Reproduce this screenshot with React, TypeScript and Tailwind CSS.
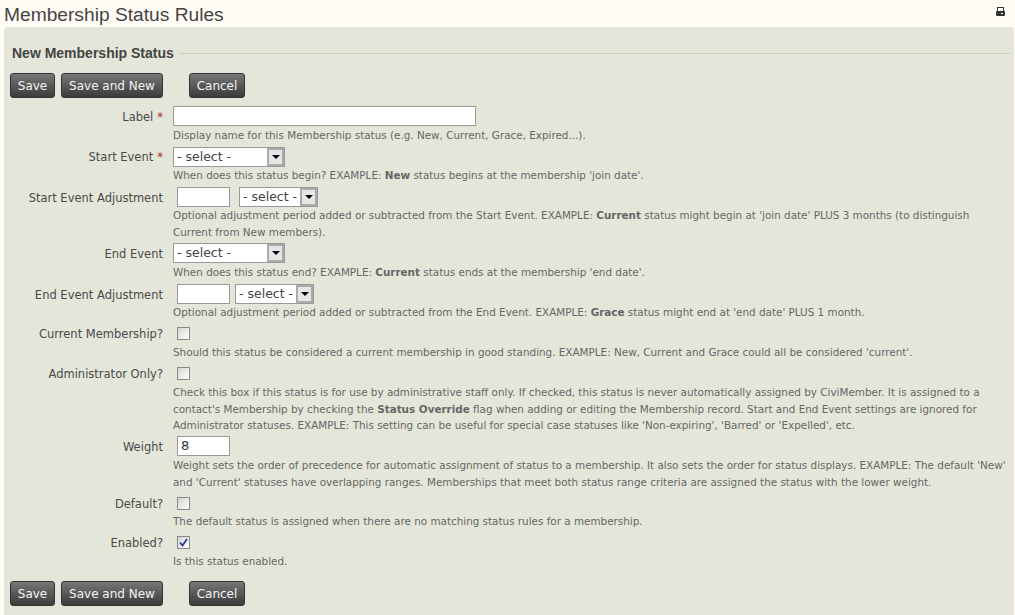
import React from "react";

const verdana = "font-['DejaVu_Sans',Verdana,sans-serif]";

const Buttons = ({ className = "" }: { className?: string }) => {
  const btn =
    "h-[25px] rounded-[3px] border border-[#333] bg-gradient-to-b from-[#777] to-[#3c3c3c] text-[12px] leading-none text-[#f4f4f4] " +
    verdana;
  return (
    <div className={"flex h-[25px] items-center " + className}>
      <button className={btn + " w-[45px]"}>Save</button>
      <button className={btn + " ml-[6px] w-[102px]"}>Save and New</button>
      <button className={btn + " ml-[26px] w-[56px]"}>Cancel</button>
    </div>
  );
};

const Select = ({ wide }: { wide?: boolean }) => (
  <div
    className={
      "flex h-[20px] items-center border border-[#999] bg-white pl-[3px] text-[12.5px] text-[#444] " +
      (wide ? "w-[112px]" : "w-auto")
    }
  >
    <span className="grow whitespace-nowrap pr-[3px]">- select -</span>
    <span className="flex h-[18px] w-[17px] items-center justify-center border-2 border-[#aaa] bg-[#e6e6e6]">
      <span className="h-0 w-0 border-x-[4px] border-t-[4px] border-x-transparent border-t-black" />
    </span>
  </div>
);

const Check = ({ checked }: { checked?: boolean }) => (
  <span className="ml-[4px] mt-[1px] flex h-[13px] w-[13px] items-center justify-center border border-[#8a8a8a] bg-gradient-to-br from-[#d4d4d0] to-white">
    {checked && (
      <svg width="9" height="9" viewBox="0 0 9 9">
        <path d="M1 4.5 L3.5 7.5 L8 1" fill="none" stroke="#2a3a9c" strokeWidth="1.8" />
      </svg>
    )}
  </span>
);

const Row = ({
  label,
  required,
  top,
  gap,
  labelTop = "pt-[3px]",
  control,
  children,
}: {
  label: string;
  required?: boolean;
  top: number;
  gap: string;
  labelTop?: string;
  control: React.ReactNode;
  children?: React.ReactNode;
}) => (
  <div className="flex" style={{ height: top }}>
    <div className={labelTop + " w-[153px] shrink-0 text-right text-[11.5px] leading-[16px] text-[#4a4a4a]"}>
      {label}
      {required && <span className="ml-[4px] text-[#b02a2a]">*</span>}
    </div>
    <div className="ml-[10px] min-w-0 grow">
      <div className="flex items-start">{control}</div>
      <div className={gap + " text-[10.4px] leading-[16.5px] text-[#666]"}>{children}</div>
    </div>
  </div>
);

const Input = ({ w, value }: { w: string; value?: string }) => (
  <div className={"h-[20px] border border-[#999] bg-white pl-[3px] text-[13px] leading-[18px] text-[#333] " + w}>
    {value}
  </div>
);

export default function App() {
  return (
    <div className={"h-[615px] w-[1015px] overflow-hidden bg-[#fffcf5] " + verdana}>
      <div className="flex h-[27px] items-start justify-between pl-[4px] pr-[10px]">
        <h1 className="font-['Liberation_Sans',Arial,sans-serif] text-[19.2px] leading-[29px] text-[#444]">
          Membership Status Rules
        </h1>
        <svg className="mt-[7px]" width="9" height="9" viewBox="0 0 9 9">
          <rect x="1.5" y="0.5" width="6" height="5" fill="#fff" stroke="#333" />
          <rect x="0" y="4" width="9" height="5" rx="1" fill="#333" />
          <rect x="5" y="6" width="2" height="1" fill="#fff" />
        </svg>
      </div>
      <div className="ml-[4px] h-[588px] w-[1010px] rounded-t-[4px] bg-[#e4e6da] pl-[6px] pr-[4px]">
        <div className="flex h-[45px] items-center pt-[8px]">
          <span className="pl-[2px] font-['Liberation_Sans',Arial,sans-serif] text-[14px] font-bold text-[#444]">
            New Membership Status
          </span>
          <span className="ml-[5px] h-px grow bg-[#c9ceb9]" />
        </div>
        <Buttons className="mt-[1px]" />
        <div className="mt-[8px]">
          <Row label="Label" required top={41} gap="mt-[1px]" control={<Input w="w-[303px]" />}>
            Display name for this Membership status (e.g. New, Current, Grace, Expired...).
          </Row>
          <Row label="Start Event" required top={40} labelTop="pt-[2px]" gap="mt-[0px]" control={<Select wide />}>
            When does this status begin? EXAMPLE: <b>New</b> status begins at the membership 'join date'.
          </Row>
          <Row
            label="Start Event Adjustment"
            top={56}
            gap="mt-[0px]"
            control={
              <div className="ml-[4px] flex gap-[9px]">
                <Input w="w-[53px]" />
                <Select />
              </div>
            }
          >
            Optional adjustment period added or subtracted from the Start Event. EXAMPLE: <b>Current</b> status might
            begin at 'join date' PLUS 3 months (to distinguish Current from New members).
          </Row>
          <Row label="End Event" top={41} gap="mt-[1px]" control={<Select wide />}>
            When does this status end? EXAMPLE: <b>Current</b> status ends at the membership 'end date'.
          </Row>
          <Row
            label="End Event Adjustment"
            top={42}
            gap="mt-0"
            control={
              <div className="ml-[4px] flex gap-[5px]">
                <Input w="w-[53px]" />
                <Select />
              </div>
            }
          >
            Optional adjustment period added or subtracted from the End Event. EXAMPLE: <b>Grace</b> status might end at
            'end date' PLUS 1 month.
          </Row>
          <Row label="Current Membership?" top={40} labelTop="pt-0" gap="mt-[4px]" control={<Check />}>
            Should this status be considered a current membership in good standing. EXAMPLE: New, Current and Grace
            could all be considered 'current'.
          </Row>
          <Row label="Administrator Only?" top={70} labelTop="pt-0" gap="mt-[4px]" control={<Check />}>
            Check this box if this status is for use by administrative staff only. If checked, this status is never
            automatically assigned by CiviMember. It is assigned to a contact's Membership by checking the{" "}
            <b>Status Override</b> flag when adding or editing the Membership record. Start and End Event settings are
            ignored for Administrator statuses. EXAMPLE: This setting can be useful for special case statuses like
            'Non-expiring', 'Barred' or 'Expelled', etc.
          </Row>
          <Row
            label="Weight"
            top={60}
            gap="mt-[1px]"
            control={
              <div className="ml-[4px]">
                <Input w="w-[53px]" value="8" />
              </div>
            }
          >
            Weight sets the order of precedence for automatic assignment of status to a membership. It also sets the
            order for status displays. EXAMPLE: The default 'New' and 'Current' statuses have overlapping ranges.
            Memberships that meet both status range criteria are assigned the status with the lower weight.
          </Row>
          <Row label="Default?" top={39} labelTop="pt-0" gap="mt-[3px]" control={<Check />}>
            The default status is assigned when there are no matching status rules for a membership.
          </Row>
          <Row label="Enabled?" top={46} labelTop="pt-0" gap="mt-[4px]" control={<Check checked />}>
            Is this status enabled.
          </Row>
        </div>
        <Buttons />
      </div>
    </div>
  );
}
